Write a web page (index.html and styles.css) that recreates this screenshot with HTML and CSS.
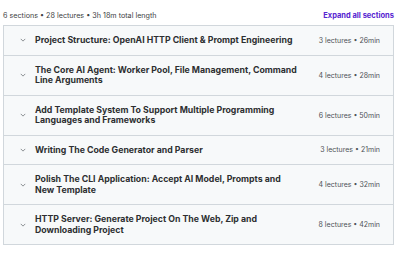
FILE: index.html
```html
<!DOCTYPE html>
<html lang="en">
<head>
    <meta charset="UTF-8">
    <meta name="viewport" content="width=device-width, initial-scale=1.0">
    <title>Course content</title>
    <link rel="stylesheet" href="styles.css">
</head>
<body>
    <div class="curriculum">
        <div class="curriculum-header">
            <span class="summary">6 sections • 28 lectures • 3h 18m total length</span>
            <button class="expand-all">Expand all sections</button>
        </div>

        <div class="sections">
            <div class="section">
                <svg class="chevron" viewBox="0 0 8 5"><path d="M1 1l3 3 3-3" /></svg>
                <span class="section-title">Project Structure: OpenAI HTTP Client &amp; Prompt Engineering</span>
                <span class="section-meta">3 lectures • 26min</span>
            </div>
            <div class="section">
                <svg class="chevron" viewBox="0 0 8 5"><path d="M1 1l3 3 3-3" /></svg>
                <span class="section-title">The Core AI Agent: Worker Pool, File Management, Command Line Arguments</span>
                <span class="section-meta">4 lectures • 28min</span>
            </div>
            <div class="section">
                <svg class="chevron" viewBox="0 0 8 5"><path d="M1 1l3 3 3-3" /></svg>
                <span class="section-title">Add Template System To Support Multiple Programming Languages and Frameworks</span>
                <span class="section-meta">6 lectures • 50min</span>
            </div>
            <div class="section">
                <svg class="chevron" viewBox="0 0 8 5"><path d="M1 1l3 3 3-3" /></svg>
                <span class="section-title">Writing The Code Generator and Parser</span>
                <span class="section-meta">3 lectures • 21min</span>
            </div>
            <div class="section">
                <svg class="chevron" viewBox="0 0 8 5"><path d="M1 1l3 3 3-3" /></svg>
                <span class="section-title">Polish The CLI Application: Accept AI Model, Prompts and New Template</span>
                <span class="section-meta">4 lectures • 32min</span>
            </div>
            <div class="section">
                <svg class="chevron" viewBox="0 0 8 5"><path d="M1 1l3 3 3-3" /></svg>
                <span class="section-title">HTTP Server: Generate Project On The Web, Zip and Downloading Project</span>
                <span class="section-meta">8 lectures • 42min</span>
            </div>
        </div>
    </div>
</body>
</html>
```

FILE: styles.css
```css
body {
    font-family: Inter, "Liberation Sans", sans-serif;
    margin: 0;
    background-color: #fff;
    color: #2d2f31;
}

.curriculum {
    width: 391px;
    margin-left: 3px;
}

.curriculum-header {
    display: flex;
    justify-content: space-between;
    align-items: center;
    height: 25px;
    padding-top: 5px;
    box-sizing: border-box;
}

.summary {
    font-size: 7.2px;
    color: #3e4143;
}

.expand-all {
    background: none;
    border: none;
    padding: 0;
    font-family: inherit;
    font-size: 7.5px;
    font-weight: 700;
    color: #5624d0;
    cursor: pointer;
}

.sections {
    border: 1px solid #d1d7dc;
    border-top: none;
}

.section {
    display: flex;
    align-items: center;
    gap: 9px;
    padding: 9px 13px 9px 16px;
    background-color: #f7f9fa;
    border-top: 1px solid #d1d7dc;
}

.chevron {
    width: 6px;
    height: 4px;
    flex-shrink: 0;
    fill: none;
    stroke: #6a6f73;
    stroke-width: 1;
}

.section-title {
    flex: 1;
    font-size: 8.75px;
    font-weight: 700;
    line-height: 10.5px;
}

.section-meta {
    flex-shrink: 0;
    margin-left: 8px;
    font-size: 7px;
    color: #4d5156;
}
```
